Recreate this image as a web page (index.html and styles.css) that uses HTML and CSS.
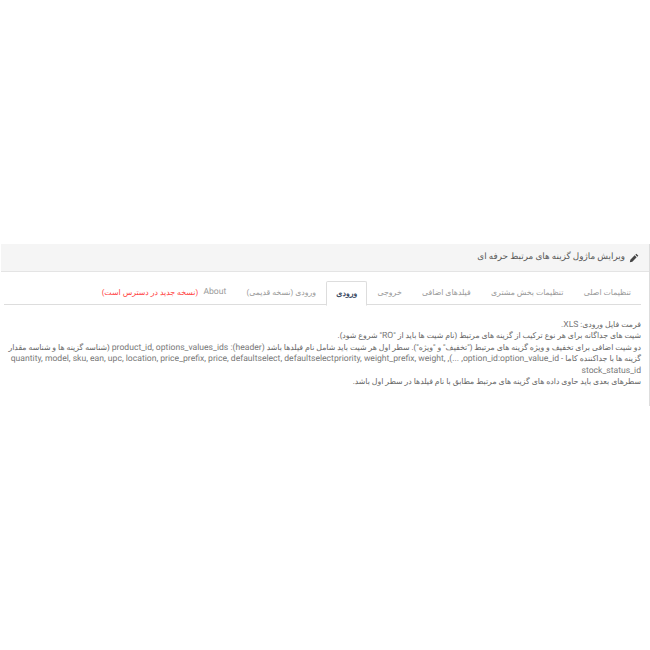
FILE: index.html
```html
<!DOCTYPE html>
<html dir="rtl" lang="fa">
<head>
  <title>ویرایش ماژول گزینه های مرتبط حرفه ای</title>
  <link rel="stylesheet" href="styles.css">
</head>
<body>
  <div class="panel">
    <div class="panel-heading">
      <svg class="pencil" viewBox="0 0 12 12"><path d="M8.8.8l2.4 2.4-1.2 1.2-2.4-2.4zM6.8 2.8l2.4 2.4-5.2 5.2L1 11l.6-3z"/></svg>
      <h3>ویرایش ماژول گزینه های مرتبط حرفه ای</h3>
    </div>
    <div class="panel-body">
      <ul class="tabs">
        <li>تنظیمات اصلی</li>
        <li>تنظیمات بخش مشتری</li>
        <li>فیلدهای اضافی</li>
        <li>خروجی</li>
        <li class="active">ورودی</li>
        <li>ورودی (نسخه قدیمی)</li>
        <li class="about">About</li>
        <li class="notice">(نسخه جدید در دسترس است)</li>
      </ul>
      <div class="tab-content">
        فرمت فایل ورودی: <span class="en">XLS.</span><br>
        شیت های جداگانه برای هر نوع ترکیب از گزینه های مرتبط (نام شیت ها باید از "<span class="en">RO</span>" شروع شود).<br>
        دو شیت اضافی برای تخفیف و ویژه گزینه های مرتبط ("تخفیف" و "ویژه"). سطر اول هر شیت باید شامل نام فیلدها باشد <span class="en">(header): product_id, options_values_ids</span> (شناسه گزینه ها و شناسه مقدار گزینه ها با جداکننده کاما - <span class="en">option_id:option_value_id, ...), quantity, model, sku, ean, upc, location, price_prefix, price, defaultselect, defaultselectpriority, weight_prefix, weight, stock_status_id</span><br>
        سطرهای بعدی باید حاوی داده های گزینه های مرتبط مطابق با نام فیلدها در سطر اول باشد.
      </div>
    </div>
  </div>
</body>
</html>
```

FILE: styles.css
```css
body {
  margin: 0;
  padding: 244px 0 0 0;
  font-family: Roboto, "DejaVu Sans", sans-serif;
  font-size: 7.8px;
  line-height: 11.4px;
  color: #666;
  background: #fff;
  text-rendering: geometricPrecision;
}
.panel {
  width: 648px;
  border-right: 1px solid #ddd;
}
.panel-heading {
  display: flex;
  align-items: center;
  gap: 4px;
  height: 27px;
  padding: 0 10px 0 0;
  background: #f5f5f5;
  border-bottom: 1px solid #e4e4e4;
}
.panel-heading h3 {
  margin: 0;
  font-size: 8.8px;
  font-weight: normal;
  color: #555;
}
.pencil {
  width: 10px;
  height: 10px;
  fill: #444;
}
.panel-body {
  padding: 9px 8px 0 3px;
}
.tabs {
  display: flex;
  height: 23px;
  margin: 0;
  padding: 0;
  list-style: none;
  border-bottom: 1px solid #ddd;
}
.tabs li {
  padding: 0 10px;
  margin-left: 0.3px;
  line-height: 23px;
  color: #999;
  white-space: nowrap;
}
.tabs .active {
  height: 23px;
  padding: 0 9px;
  background: #fff;
  border: 1px solid #ddd;
  border-bottom-color: #fff;
  border-radius: 2px 2px 0 0;
  color: #2b3a55;
  -webkit-text-stroke: 0.25px #2b3a55;
}
.tabs .about {
  padding-left: 5px;
  font-size: 8.6px;
}
.tabs .notice {
  padding: 0;
  color: #f44;
}
.tab-content {
  padding: 14px 0 19px;
}
.en {
  font-size: 8.6px;
  line-height: 1;
  color: #777;
}
```
